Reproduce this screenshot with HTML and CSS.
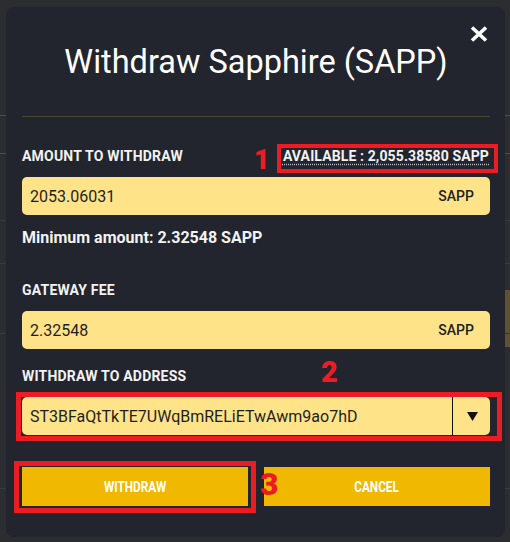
FILE: index.html
```html
<!DOCTYPE html>
<html lang="en">
<head>
<meta charset="utf-8">
<title>Withdraw Sapphire (SAPP)</title>
<link rel="stylesheet" href="styles.css">
</head>
<body>
<div class="modal">
  <button class="close" aria-label="Close">
    <svg width="20" height="18" viewBox="0 0 20 18"><path d="M3 2.5 L17 15.5 M17 2.5 L3 15.5" stroke="#fff" stroke-width="3.6" fill="none"/></svg>
  </button>
  <h1 class="title">Withdraw Sapphire (SAPP)</h1>
  <div class="sep"></div>

  <div class="label-row">
    <span class="label">AMOUNT TO WITHDRAW</span>
    <span class="avail">AVAILABLE : 2,055.38580 SAPP</span>
  </div>
  <div class="field field-first">
    <span class="val">2053.06031</span>
    <span class="unit">SAPP</span>
  </div>
  <div class="min">Minimum amount: 2.32548 SAPP</div>

  <div class="label label-fee">GATEWAY FEE</div>
  <div class="field">
    <span class="val">2.32548</span>
    <span class="unit">SAPP</span>
  </div>

  <div class="label label-addr">WITHDRAW TO ADDRESS</div>
  <div class="select">
    <span class="select-val">ST3BFaQtTkTE7UWqBmRELiETwAwm9ao7hD</span>
    <span class="select-arrow">
      <svg width="11" height="9" viewBox="0 0 11 9"><polygon points="0,0 11,0 5.5,9" fill="#111"/></svg>
    </span>
  </div>

  <div class="buttons">
    <button class="btn"><span>WITHDRAW</span></button>
    <button class="btn"><span>CANCEL</span></button>
  </div>

  <div class="mark mark-box box1"></div>
  <div class="mark num num1">1</div>
  <div class="mark mark-box box2"></div>
  <div class="mark num num2">2</div>
  <div class="mark mark-box box3"></div>
  <div class="mark num num3">3</div>
</div>
</body>
</html>
```
FILE: styles.css
```css
* { box-sizing: border-box; }
html, body { margin: 0; padding: 0; }
body {
  width: 510px;
  height: 542px;
  overflow: hidden;
  font-family: Roboto, "Liberation Sans", sans-serif;
  background:
    linear-gradient(#5e4f22, #5e4f22) 0 115px / 100% 1px no-repeat,
    linear-gradient(#5e4f22, #5e4f22) 0 153px / 100% 1px no-repeat,
    linear-gradient(#3a3b3e, #3a3b3e) 0 220px / 100% 1px no-repeat,
    linear-gradient(#3a3b3e, #3a3b3e) 0 263px / 100% 1px no-repeat,
    linear-gradient(#3a3b3e, #3a3b3e) 0 333px / 100% 1px no-repeat,
    linear-gradient(#3a3b3e, #3a3b3e) 0 488px / 100% 1px no-repeat,
    linear-gradient(#5f5230, #5f5230) 505px 290px / 5px 57px no-repeat,
    #2c2d30;
  padding: 7px 0 0 6px;
}
.modal {
  position: relative;
  width: 499px;
  height: 530px;
  background: #22252d;
  border-radius: 8px;
  padding: 36px 15px 31px 16px;
  color: #f2f2f2;
}
.close {
  position: absolute;
  left: 463px;
  top: 18px;
  width: 20px;
  height: 18px;
  padding: 0;
  border: 0;
  background: none;
  display: block;
}
.close svg { display: block; }
.title {
  margin: 0;
  font-size: 32.5px;
  font-weight: 400;
  line-height: 38px;
  text-align: center;
  color: #fff;
}
.sep {
  margin-top: 35px;
  height: 1px;
  background: #4b4838;
}
.label-row {
  margin-top: 31px;
  display: flex;
  justify-content: space-between;
  align-items: baseline;
}
.label {
  font-size: 14px;
  font-weight: 700;
  line-height: 16px;
  letter-spacing: 0.2px;
  color: #f2f2f2;
}
.avail {
  font-size: 14px;
  font-weight: 700;
  line-height: 16px;
  letter-spacing: 0.12px;
  color: #f2f2f2;
  text-decoration: underline dotted #b9bcc4;
  text-underline-offset: 3px;
  margin-right: 1px;
}
.field {
  margin-top: 13px;
  height: 38px;
  border-radius: 5px;
  background: #ffe388;
  display: flex;
  align-items: center;
  justify-content: space-between;
  padding: 0 16px 0 8px;
  color: #1e1e1e;
}
.val { font-size: 16px; }
.unit { font-size: 14px; font-weight: 500; }
.min {
  margin-top: 13px;
  font-size: 16px;
  font-weight: 700;
  line-height: 19px;
  color: #f2f2f2;
}
.label-fee { margin-top: 35px; }
.label-addr { margin-top: 19px; }
.select {
  margin-top: 13px;
  height: 38px;
  border-radius: 5px;
  background: #ffe388;
  display: flex;
  align-items: stretch;
  color: #1e1e1e;
}
.select-val {
  flex: 1;
  display: flex;
  align-items: center;
  padding-left: 8px;
  font-size: 16px;
}
.select-arrow {
  width: 38px;
  border-left: 1px solid #111;
  display: flex;
  align-items: center;
  justify-content: center;
}
.select-arrow svg { display: block; margin-left: 1px; }
.buttons {
  margin-top: 32px;
  display: flex;
  gap: 16px;
}
.btn {
  flex: 1;
  height: 39px;
  border: 0;
  border-radius: 0;
  background: #f0b800;
  color: #fff;
  font-family: Roboto, "Liberation Sans", sans-serif;
  font-size: 14px;
  font-weight: 700;
  padding: 0;
  display: flex;
  align-items: center;
  justify-content: center;
}
.btn span {
  display: inline-block;
  transform: scaleX(0.84);
}
.mark { position: absolute; }
.mark-box {
  border: 4px solid #ec1c24;
}
.box1 { left: 271px; top: 137px; width: 221px; height: 29px; }
.box2 { left: 10px; top: 385px; width: 486px; height: 49px; border-width: 5px; }
.box3 { left: 8px; top: 454px; width: 242px; height: 52px; border-width: 5px; }
.num {
  color: #ec1c24;
  font-weight: 900;
  line-height: 1;
}
.num1 { left: 248px; top: 140px; font-size: 27px; line-height: 27px; }
.num2 { left: 315px; top: 351px; font-size: 29px; line-height: 29px; }
.num3 { left: 254px; top: 461px; font-size: 32px; line-height: 32px; }
```
